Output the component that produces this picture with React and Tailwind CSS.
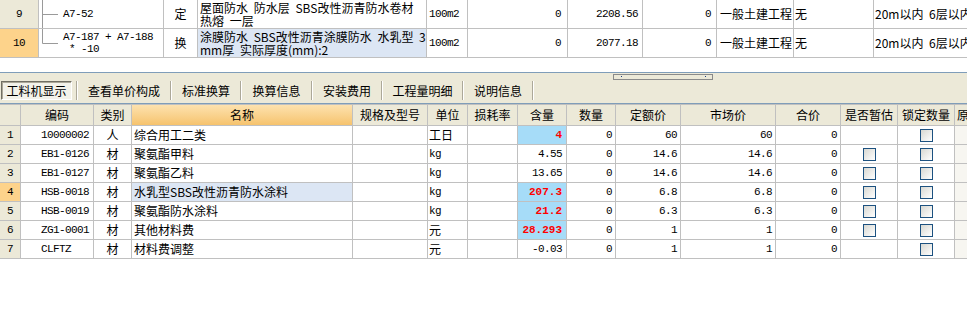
import React from 'react';

const cjk = "font-['Noto_Sans_CJK_SC',sans-serif]";
const mono = "font-['Liberation_Mono','Noto_Sans_CJK_SC',monospace]";
const num = `${mono} text-[11px] tracking-[-0.6px]`;

const topCols = 'grid grid-cols-[39px_125px_34px_229px_41px_100px_75px_74px_77px_80px_1fr]';
const tcell = 'border-r border-b border-[#c0c0c0] h-[29px] flex items-center overflow-hidden whitespace-nowrap';

const gridCols = 'grid grid-cols-[21px_73px_38px_221px_75px_40px_50px_49px_49px_65px_95px_65px_57px_57px_1fr]';
const cell = 'border-r border-b border-[#c0c0c0] h-[19px] flex items-center overflow-hidden whitespace-nowrap';

const topRows = [
  {
    num: '9',
    numBg: 'bg-[#ece9d8]',
    last: false,
    code: ['A7-52'],
    type: '定',
    name: ['屋面防水 防水层 SBS改性沥青防水卷材', '热熔 一层'],
    nameBg: '',
    price: '2208.56',
  },
  {
    num: '10',
    numBg: 'bg-[#fdd38b]',
    last: true,
    code: ['A7-187 + A7-188', ' * -10'],
    type: '换',
    name: ['涂膜防水 SBS改性沥青涂膜防水 水乳型 3', 'mm厚 实际厚度(mm):2'],
    nameBg: 'bg-[#dce6f4]',
    price: '2077.18',
  },
];

const headers = ['', '编码', '类别', '名称', '规格及型号', '单位', '损耗率', '含量', '数量', '定额价', '市场价', '合价', '是否暂估', '锁定数量'];

const rows = [
  { n: '1', code: '10000002', type: '人', name: '综合用工二类', unit: '工日', qty: '4', hl: true, quota: '60', market: '60', est: false },
  { n: '2', code: 'EB1-0126', type: '材', name: '聚氨酯甲料', unit: 'kg', qty: '4.55', hl: false, quota: '14.6', market: '14.6', est: true },
  { n: '3', code: 'EB1-0127', type: '材', name: '聚氨酯乙料', unit: 'kg', qty: '13.65', hl: false, quota: '14.6', market: '14.6', est: true },
  { n: '4', code: 'HSB-0018', type: '材', name: '水乳型SBS改性沥青防水涂料', unit: 'kg', qty: '207.3', hl: true, quota: '6.8', market: '6.8', est: true, sel: true },
  { n: '5', code: 'HSB-0019', type: '材', name: '聚氨酯防水涂料', unit: 'kg', qty: '21.2', hl: true, quota: '6.3', market: '6.3', est: true },
  { n: '6', code: 'ZG1-0001', type: '材', name: '其他材料费', unit: '元', qty: '28.293', hl: true, quota: '1', market: '1', est: true },
  { n: '7', code: 'CLFTZ', type: '材', name: '材料费调整', unit: '元', qty: '-0.03', hl: false, quota: '1', market: '1', est: false },
];

const tabs = [
  { label: '查看单价构成', w: 'w-[92px]' },
  { label: '标准换算', w: 'w-[68px]' },
  { label: '换算信息', w: 'w-[69px]' },
  { label: '安装费用', w: 'w-[68px]' },
  { label: '工程量明细', w: 'w-[79px]' },
  { label: '说明信息', w: 'w-[68px]' },
];

const Tree = ({ last }) => (
  <svg width="22" height="28" className="shrink-0">
    <line x1="3.5" y1="0" x2="3.5" y2={last ? 14.5 : 28} stroke="#9a9a9a" />
    <line x1="3.5" y1="14.5" x2="19" y2="14.5" stroke="#9a9a9a" />
  </svg>
);

const Check = () => (
  <span className="block w-[13px] h-[13px] border border-[#1c5180] bg-linear-to-br from-[#d8d8d2] to-white" />
);

const Sep = () => (
  <div className="w-[2px] h-[19px] border-l border-l-[#aca899] border-r border-r-white" />
);

function TopTable() {
  return (
    <div className="text-[12px]">
      {topRows.map((r) => (
        <div key={r.num} className={topCols}>
          <div className={`${tcell} justify-center ${num} ${r.numBg}`}>{r.num}</div>
          <div className={tcell}>
            <Tree last={r.last} />
            <div className={`ml-[2px] ${num} leading-[12px] whitespace-pre`}>
              {r.code.map((c) => (
                <div key={c}>{c}</div>
              ))}
            </div>
          </div>
          <div className={`${tcell} justify-center`}>{r.type}</div>
          <div className={`${tcell} ${r.nameBg} pl-[2px] leading-[13px] [word-spacing:3px]`}>
            <div>
              {r.name.map((t) => (
                <div key={t}>{t}</div>
              ))}
            </div>
          </div>
          <div className={`${tcell} pl-[2px] ${num}`}>100m2</div>
          <div className={`${tcell} justify-end pr-[6px] ${num}`}>0</div>
          <div className={`${tcell} justify-end pr-[4px] ${num}`}>{r.price}</div>
          <div className={`${tcell} justify-end pr-[5px] ${num}`}>0</div>
          <div className={`${tcell} pl-[3px]`}>一般土建工程</div>
          <div className={`${tcell} pl-[1px]`}>无</div>
          <div className="border-b border-[#c0c0c0] h-[29px] flex items-center overflow-hidden whitespace-nowrap pl-[1px] [word-spacing:3px]">
            20m以内 6层以内
          </div>
        </div>
      ))}
    </div>
  );
}

function TabBar() {
  return (
    <div className="relative h-[32px] bg-[#ece9d8] border-t border-b border-[#7f9db9] text-[12px]">
      <div className="absolute left-[613px] top-[1px] w-[100px] h-[6px] border border-[#8a8a8a] bg-[#ece9d8]">
        <span className="absolute left-[7px] top-[1px] w-[1px] h-[1px] bg-[#1c3c80]" />
        <span className="absolute left-[91px] top-[1px] w-[1px] h-[1px] bg-[#1c3c80]" />
      </div>
      <div className="flex items-start pt-[8px]">
        <div className="w-[76px] pl-[1px]">
          <div className="w-[71px] h-[19px] flex items-center justify-center border border-t-[#716f64] border-l-[#716f64] border-b-white border-r-white bg-[#f3f2ea] shadow-[inset_1px_1px_0_#aca899]">
            工料机显示
          </div>
        </div>
        <Sep />
        {tabs.map((t) => (
          <React.Fragment key={t.label}>
            <div className={`${t.w} h-[19px] flex items-center justify-center`}>{t.label}</div>
            <Sep />
          </React.Fragment>
        ))}
      </div>
    </div>
  );
}

function Grid() {
  return (
    <div className="text-[12px]">
      <div className={`${gridCols} border-t border-[#c0c0c0] bg-[#ece9d8]`}>
        {headers.map((h, i) => (
          <div
            key={i}
            className={`border-r border-b border-[#c0c0c0] h-[21px] flex items-center justify-center whitespace-nowrap overflow-hidden ${
              i === 3 ? 'bg-linear-to-b from-[#fde2ae] to-[#f6c36d]' : ''
            }`}
          >
            {h}
          </div>
        ))}
        <div className="border-b border-[#c0c0c0] h-[21px] flex items-center pl-[2px] whitespace-nowrap overflow-hidden">原</div>
      </div>
      {rows.map((r) => (
        <div key={r.n} className={gridCols}>
          <div className={`${cell} justify-center ${num} ${r.sel ? 'bg-[#fdd38b]' : 'bg-[#ece9d8]'}`}>{r.n}</div>
          <div className={`${cell} pl-[20px] ${num}`}>{r.code}</div>
          <div className={`${cell} justify-center`}>{r.type}</div>
          <div className={`${cell} pl-[2px] ${r.sel ? 'bg-[#dce6f4]' : ''}`}>{r.name}</div>
          <div className={cell} />
          <div className={`${cell} pl-[1px] ${r.unit === 'kg' ? num : ''}`}>{r.unit}</div>
          <div className={cell} />
          <div
            className={`${cell} justify-end pr-[4px] ${
              r.hl ? `${mono} bg-[#a6dcf8] text-[#ff0000] font-bold text-[11px]` : num
            }`}
          >
            {r.qty}
          </div>
          <div className={`${cell} justify-end pr-[3px] ${num}`}>0</div>
          <div className={`${cell} justify-end pr-[3px] ${num}`}>{r.quota}</div>
          <div className={`${cell} justify-end pr-[3px] ${num}`}>{r.market}</div>
          <div className={`${cell} justify-end pr-[3px] ${num}`}>0</div>
          <div className={`${cell} justify-center`}>{r.est && <Check />}</div>
          <div className={`${cell} justify-center`}>
            <Check />
          </div>
          <div className="border-b border-[#c0c0c0] h-[19px] bg-[#f7f6f1]" />
        </div>
      ))}
    </div>
  );
}

export default function App() {
  return (
    <div className={`w-[967px] h-[320px] bg-white overflow-hidden text-black ${cjk}`}>
      <TopTable />
      <div className="h-[14px]" />
      <TabBar />
      <Grid />
    </div>
  );
}
